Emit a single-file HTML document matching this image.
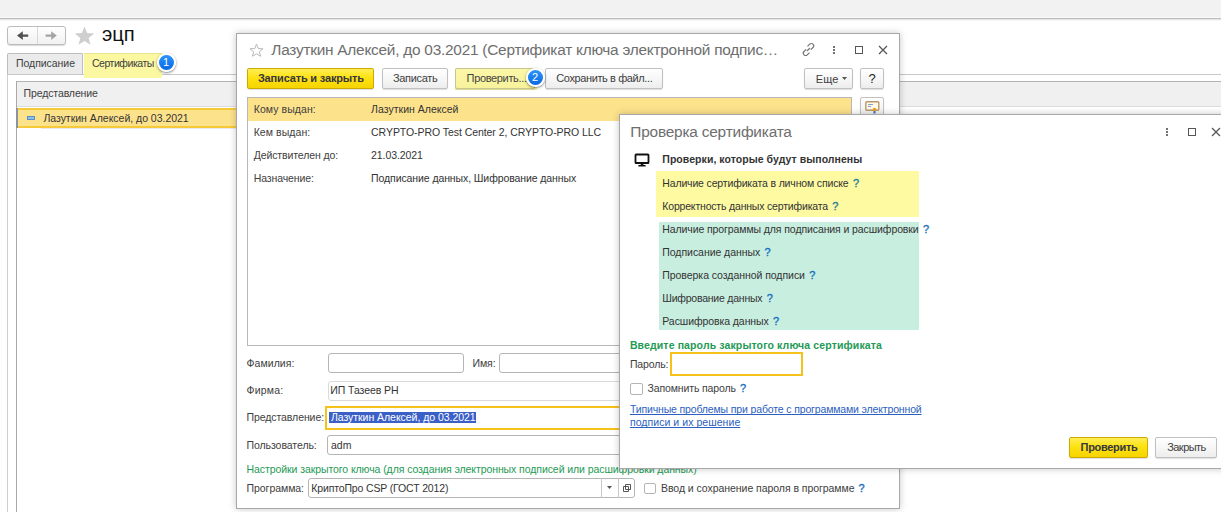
<!DOCTYPE html><html><head><meta charset="utf-8"><style>
html,body{margin:0;padding:0;}
body{width:1221px;height:512px;position:relative;overflow:hidden;background:#fff;font-family:"Liberation Sans",sans-serif;}
.t{position:absolute;white-space:pre;line-height:1;font-family:"Liberation Sans",sans-serif;}
</style></head><body>
<div style="position:absolute;left:0px;top:0px;width:1221px;height:17px;background:#f2f2f2;"></div>
<div style="position:absolute;left:0px;top:17px;width:1221px;height:1px;background:#f9f9f9;"></div>
<div style="position:absolute;left:0px;top:18px;width:1221px;height:1px;background:#bcbcbc;"></div>
<div style="position:absolute;left:0px;top:19px;width:1221px;height:1px;background:#e6e6e6;"></div>
<div style="position:absolute;left:0px;top:20px;width:1221px;height:1px;background:#f7f7f7;"></div>
<div style="position:absolute;left:7px;top:26px;width:57px;height:17px;border:1px solid #bcbcbc;border-radius:3px;background:linear-gradient(#fff,#f1f1f1);box-shadow:0 1px 1px rgba(0,0,0,.15);"></div>
<div style="position:absolute;left:37px;top:27px;width:1px;height:17px;background:#d8d8d8;"></div>
<svg style="position:absolute;left:0;top:0" width="70" height="50"><path d="M17 35.6 L22.8 31.2 L22.8 34.4 L28.2 34.4 L28.2 36.8 L22.8 36.8 L22.8 40 Z" fill="#505050"/><path d="M56.8 35.6 L51.2 31.2 L51.2 34.4 L45.6 34.4 L45.6 36.8 L51.2 36.8 L51.2 40 Z" fill="#a4a4a4"/></svg>
<svg style="position:absolute;left:74px;top:26px" width="21" height="19" viewBox="0 0 24 22"><path d="M12 0.5 L15 8.2 L23.3 8.6 L16.8 13.8 L19 21.8 L12 17.3 L5 21.8 L7.2 13.8 L0.7 8.6 L9 8.2 Z" fill="#cfcfcf"/></svg>
<div class="t" style="left:102px;top:24.00px;font-size:20.2px;color:#111;font-weight:normal;letter-spacing:-0.032px;">эцп</div>
<div style="position:absolute;left:7px;top:53px;width:74px;height:21px;background:#ebebeb;border:1px solid #bdbdbd;border-bottom:none;border-radius:2px 2px 0 0;"></div>
<div class="t" style="left:16px;top:58.00px;font-size:10.5px;color:#404040;font-weight:normal;letter-spacing:-0.044px;">Подписание</div>
<div style="position:absolute;left:84px;top:52.5px;width:78px;height:25.5px;background:#fcf8a2;border-top:1px solid #e8e290;box-sizing:border-box;"></div>
<div class="t" style="left:91.9px;top:58.00px;font-size:10.5px;color:#404040;font-weight:normal;letter-spacing:-0.455px;">Сертификаты</div>
<div style="position:absolute;left:7px;top:74px;width:1214px;height:440px;border-top:1px solid #c8c8c8;border-left:1px solid #cfcfcf;"></div>
<div style="position:absolute;left:84px;top:74px;width:78px;height:4px;background:#fcf8a2;"></div>
<div style="position:absolute;left:16px;top:81px;width:1205px;height:440px;border-top:1px solid #b4b4b4;border-left:1px solid #a9a9a9;"></div>
<div style="position:absolute;left:17px;top:82px;width:1204px;height:24px;background:#f0f0f0;border-bottom:1px solid #dcdcdc;"></div>
<div class="t" style="left:23.5px;top:88.00px;font-size:10.5px;color:#404040;font-weight:normal;letter-spacing:-0.109px;">Представление</div>
<div style="position:absolute;left:17px;top:108px;width:220px;height:20px;background:#fde28c;border-top:2px solid #f6c938;border-bottom:2px solid #f6c938;box-sizing:border-box;"></div>
<div style="position:absolute;left:16px;top:108px;width:2px;height:20px;background:#8a94a0;"></div>
<div style="position:absolute;left:26.5px;top:116px;width:6px;height:1.5px;background:#8cc0ea;border:1px solid #5a90c8;"></div>
<div style="position:absolute;left:41px;top:128px;width:196px;height:1px;background:#e6eaf2;"></div>
<div class="t" style="left:43.4px;top:113.00px;font-size:10.5px;color:#333;font-weight:normal;letter-spacing:-0.020px;">Лазуткин Алексей, до 03.2021</div>
<div style="position:absolute;left:156.5px;top:53.2px;width:15px;height:15px;border-radius:50%;background:linear-gradient(#2c94fa,#0a68e4);border:2px solid #fff;box-shadow:0 1px 2.5px rgba(0,0,0,.5);color:#fff;font:normal 11px/15px 'Liberation Sans',sans-serif;text-align:center;">1</div>
<div style="position:absolute;left:236px;top:33px;width:662px;height:474px;background:#fff;border:1px solid #a8a8a8;box-shadow:0 0 7px rgba(0,0,0,.22);"></div>
<svg style="position:absolute;left:249px;top:43px" width="15" height="14" viewBox="0 0 24 22"><path d="M12 1.5 L14.8 8.6 L22.5 9 L16.5 13.9 L18.5 21 L12 17 L5.5 21 L7.5 13.9 L1.5 9 L9.2 8.6 Z" fill="none" stroke="#b9b9b9" stroke-width="1.6"/></svg>
<div class="t" style="left:271.3px;top:42.00px;font-size:15.4px;color:#6e6e6e;font-weight:normal;letter-spacing:-0.242px;">Лазуткин Алексей, до 03.2021 (Сертификат ключа электронной подпис…</div>
<svg style="position:absolute;left:801px;top:42px" width="15" height="15" viewBox="0 0 15 15"><path d="M6 9 L9 6" stroke="#777" stroke-width="1.2"/><path d="M5.2 7.3 L3 9.5 a2.3 2.3 0 0 0 3.3 3.3 L8.5 10.6" stroke="#777" stroke-width="1.2" fill="none"/><path d="M9.8 7.7 L12 5.5 a2.3 2.3 0 0 0 -3.3 -3.3 L6.5 4.4" stroke="#777" stroke-width="1.2" fill="none"/></svg>
<div style="position:absolute;left:833px;top:46.0px;width:2px;height:2px;background:#444;border-radius:1px;"></div>
<div style="position:absolute;left:833px;top:49.2px;width:2px;height:2px;background:#444;border-radius:1px;"></div>
<div style="position:absolute;left:833px;top:52.4px;width:2px;height:2px;background:#444;border-radius:1px;"></div>
<div style="position:absolute;left:855px;top:46px;width:6px;height:6px;border:1.3px solid #555;"></div>
<svg style="position:absolute;left:878px;top:45px" width="10" height="10" viewBox="0 0 10 10"><path d="M1 1 L9 9 M9 1 L1 9" stroke="#555" stroke-width="1.2"/></svg>
<div style="position:absolute;left:247px;top:68px;width:125px;height:19px;border-radius:2px;box-shadow:0 1px 1px rgba(0,0,0,.13);background:linear-gradient(#ffee55,#fde212 45%,#f6d400);border:1px solid #cdaa00;"></div>
<div class="t" style="left:257.9px;top:73.00px;font-size:11px;color:#363640;font-weight:bold;letter-spacing:-0.168px;">Записать и закрыть</div>
<div style="position:absolute;left:382px;top:68px;width:64px;height:19px;border-radius:2px;box-shadow:0 1px 1px rgba(0,0,0,.13);background:linear-gradient(#ffffff,#f6f6f6 55%,#ededed);border:1px solid #c0c0c0;"></div>
<div class="t" style="left:393px;top:73.00px;font-size:11px;color:#404040;font-weight:normal;letter-spacing:-0.327px;">Записать</div>
<div style="position:absolute;left:455px;top:68px;width:82px;height:22px;background:#f9f6a8;"></div>
<div style="position:absolute;left:455px;top:68px;width:78px;height:19px;border-radius:2px;box-shadow:0 1px 1px rgba(0,0,0,.13);background:linear-gradient(#fbf7a8,#f7f29a);border:1px solid #c9c590;"></div>
<div class="t" style="left:466.6px;top:73.00px;font-size:11px;color:#444;font-weight:normal;letter-spacing:-0.349px;">Проверить...</div>
<div style="position:absolute;left:545px;top:68px;width:116px;height:19px;border-radius:2px;box-shadow:0 1px 1px rgba(0,0,0,.13);background:linear-gradient(#ffffff,#f6f6f6 55%,#ededed);border:1px solid #c0c0c0;"></div>
<div class="t" style="left:556.3px;top:73.00px;font-size:11px;color:#404040;font-weight:normal;letter-spacing:-0.396px;">Сохранить в файл...</div>
<div style="position:absolute;left:525.5px;top:67.9px;width:15px;height:15px;border-radius:50%;background:linear-gradient(#2c94fa,#0a68e4);border:2px solid #fff;box-shadow:0 1px 2.5px rgba(0,0,0,.5);color:#fff;font:normal 11px/15px 'Liberation Sans',sans-serif;text-align:center;">2</div>
<div style="position:absolute;left:804px;top:68px;width:47px;height:19px;border-radius:2px;box-shadow:0 1px 1px rgba(0,0,0,.13);background:linear-gradient(#ffffff,#f6f6f6 55%,#ededed);border:1px solid #c0c0c0;"></div>
<div class="t" style="left:815.8px;top:74.00px;font-size:11px;color:#404040;font-weight:normal;letter-spacing:0.036px;">Еще</div>
<svg style="position:absolute;left:842px;top:77px" width="6" height="4"><path d="M0 0 H5 L2.5 3 Z" fill="#555"/></svg>
<div style="position:absolute;left:860px;top:68px;width:22px;height:19px;border-radius:2px;box-shadow:0 1px 1px rgba(0,0,0,.13);background:linear-gradient(#ffffff,#f6f6f6 55%,#ededed);border:1px solid #c0c0c0;"></div>
<div class="t" style="left:868.5px;top:72.00px;font-size:13px;color:#222;font-weight:normal;letter-spacing:0.000px;">?</div>
<div style="position:absolute;left:247px;top:97px;width:605px;height:249px;border:1px solid #b8b8b8;box-sizing:border-box;"></div>
<div style="position:absolute;left:248px;top:98px;width:603px;height:23px;background:#fde28c;"></div>
<div class="t" style="left:253.7px;top:104.00px;font-size:10.5px;color:#404040;font-weight:normal;letter-spacing:0.074px;">Кому выдан:</div>
<div class="t" style="left:371.1px;top:104.00px;font-size:10.5px;color:#333;font-weight:normal;letter-spacing:0.013px;">Лазуткин Алексей</div>
<div class="t" style="left:253.7px;top:127.00px;font-size:10.5px;color:#404040;font-weight:normal;letter-spacing:0.069px;">Кем выдан:</div>
<div class="t" style="left:371.1px;top:127.00px;font-size:10.5px;color:#333;font-weight:normal;letter-spacing:-0.061px;">CRYPTO-PRO Test Center 2, CRYPTO-PRO LLC</div>
<div class="t" style="left:253.7px;top:150.00px;font-size:10.5px;color:#404040;font-weight:normal;letter-spacing:-0.105px;">Действителен до:</div>
<div class="t" style="left:371.1px;top:150.00px;font-size:10.5px;color:#333;font-weight:normal;letter-spacing:-0.086px;">21.03.2021</div>
<div class="t" style="left:253.7px;top:173.00px;font-size:10.5px;color:#404040;font-weight:normal;letter-spacing:-0.097px;">Назначение:</div>
<div class="t" style="left:371.1px;top:173.00px;font-size:10.5px;color:#333;font-weight:normal;letter-spacing:-0.095px;">Подписание данных, Шифрование данных</div>
<div style="position:absolute;left:860px;top:97px;width:22px;height:19px;border-radius:2px;box-shadow:0 1px 1px rgba(0,0,0,.13);background:linear-gradient(#ffffff,#f6f6f6 55%,#ededed);border:1px solid #c0c0c0;"></div>
<svg style="position:absolute;left:865px;top:101px" width="15" height="14" viewBox="0 0 15 14"><rect x="0.8" y="0.8" width="13" height="8.5" rx="1" fill="#fffbe8" stroke="#b8996a" stroke-width="1.4"/><path d="M3 3.5 H8 M3 5.5 H6" stroke="#6a8ac0" stroke-width="0.8"/><path d="M8.5 9 L8.5 13 L9.5 12 L10.5 13 L10.5 9 Z" fill="#3070c0"/><circle cx="9.5" cy="8.5" r="1.8" fill="#f0a020"/></svg>
<div class="t" style="left:246.5px;top:358.00px;font-size:10.5px;color:#404040;font-weight:normal;letter-spacing:0.061px;">Фамилия:</div>
<div style="position:absolute;left:327.5px;top:353px;width:136.5px;height:20px;border:1px solid #b5b5b5;border-radius:3px;box-sizing:border-box;"></div>
<div class="t" style="left:472.5px;top:358.00px;font-size:10.5px;color:#404040;font-weight:normal;letter-spacing:-0.094px;">Имя:</div>
<div style="position:absolute;left:499px;top:353px;width:385px;height:20px;border:1px solid #b5b5b5;border-radius:3px;box-sizing:border-box;"></div>
<div class="t" style="left:246.5px;top:385.00px;font-size:10.5px;color:#404040;font-weight:normal;letter-spacing:0.221px;">Фирма:</div>
<div style="position:absolute;left:327.5px;top:381px;width:556px;height:20px;border:1px solid #dadada;border-radius:3px;box-sizing:border-box;"></div>
<div class="t" style="left:330.3px;top:385.00px;font-size:10.5px;color:#333;font-weight:normal;letter-spacing:-0.078px;">ИП Тазеев РН</div>
<div class="t" style="left:246.5px;top:412.00px;font-size:10.5px;color:#404040;font-weight:normal;letter-spacing:-0.081px;">Представление:</div>
<div style="position:absolute;left:325px;top:406px;width:559px;height:24px;border:2px solid #f5c21a;box-sizing:border-box;"></div>
<div style="position:absolute;left:329.4px;top:412.2px;width:146.6px;height:11.1px;background:#3a5fc7;"></div>
<div class="t" style="left:330.9px;top:412.00px;font-size:10.5px;color:#fff;font-weight:normal;letter-spacing:-0.041px;">Лазуткин Алексей, до 03.2021</div>
<div class="t" style="left:246.5px;top:440.00px;font-size:10.5px;color:#404040;font-weight:normal;letter-spacing:-0.066px;">Пользователь:</div>
<div style="position:absolute;left:327px;top:435px;width:557px;height:20px;border:1px solid #b5b5b5;border-radius:3px;box-sizing:border-box;"></div>
<div class="t" style="left:330.9px;top:440.00px;font-size:10.5px;color:#333;font-weight:normal;letter-spacing:0.087px;">adm</div>
<div class="t" style="left:246.5px;top:464.00px;font-size:10.5px;color:#1e9a55;font-weight:normal;letter-spacing:-0.075px;">Настройки закрытого ключа (для создания электронных подписей или расшифровки данных)</div>
<div class="t" style="left:246.5px;top:483.00px;font-size:10.5px;color:#404040;font-weight:normal;letter-spacing:-0.044px;">Программа:</div>
<div style="position:absolute;left:307.5px;top:478px;width:327px;height:20px;border:1px solid #b5b5b5;border-radius:3px;box-sizing:border-box;"></div>
<div style="position:absolute;left:601px;top:478px;width:1px;height:20px;background:#c8c8c8;"></div>
<div style="position:absolute;left:618px;top:478px;width:1px;height:20px;background:#c8c8c8;"></div>
<div class="t" style="left:311.3px;top:483.00px;font-size:10.5px;color:#333;font-weight:normal;letter-spacing:-0.147px;">КриптоПро CSP (ГОСТ 2012)</div>
<svg style="position:absolute;left:607px;top:486px" width="6" height="4"><path d="M0 0 H5 L2.5 3 Z" fill="#555"/></svg>
<svg style="position:absolute;left:622px;top:483px" width="10" height="10" viewBox="0 0 10 10"><path d="M3.5 1.5 H8.5 V6.5 H3.5 Z M1.5 3.5 H6.5 V8.5 H1.5 Z" fill="#fff" stroke="#555" stroke-width="1"/></svg>
<div style="position:absolute;left:644px;top:482.5px;width:12px;height:11.5px;border:1px solid #b5b5b5;border-radius:2px;box-sizing:border-box;"></div>
<div class="t" style="left:661px;top:483.00px;font-size:10.5px;color:#404040;font-weight:normal;letter-spacing:-0.051px;">Ввод и сохранение пароля в программе</div>
<div class="t" style="left:858.5px;top:483.00px;font-size:11px;color:#1a6ec0;font-weight:normal;letter-spacing:0.000px;-webkit-text-stroke:0.35px currentColor;">?</div>
<div style="position:absolute;left:619px;top:114px;width:620px;height:353px;background:#fff;border:1px solid #a8a8a8;box-shadow:0 0 7px rgba(0,0,0,.22);"></div>
<div class="t" style="left:630.3px;top:124.00px;font-size:15.4px;color:#6e6e6e;font-weight:normal;letter-spacing:-0.196px;">Проверка сертификата</div>
<div style="position:absolute;left:1166px;top:127.5px;width:2px;height:2px;background:#444;border-radius:1px;"></div>
<div style="position:absolute;left:1166px;top:130.7px;width:2px;height:2px;background:#444;border-radius:1px;"></div>
<div style="position:absolute;left:1166px;top:133.9px;width:2px;height:2px;background:#444;border-radius:1px;"></div>
<div style="position:absolute;left:1188px;top:128px;width:6px;height:6px;border:1.3px solid #555;"></div>
<svg style="position:absolute;left:1211px;top:127px" width="10" height="10" viewBox="0 0 10 10"><path d="M1 1 L9 9 M9 1 L1 9" stroke="#555" stroke-width="1.2"/></svg>
<svg style="position:absolute;left:634px;top:153px" width="16" height="15" viewBox="0 0 16 15"><rect x="1.5" y="1.5" width="13" height="8.5" rx="0.6" fill="none" stroke="#111" stroke-width="1.8"/><rect x="6.8" y="10" width="2.6" height="2.3" fill="#111"/><rect x="4.3" y="12" width="7.4" height="1.6" rx="0.6" fill="#111"/></svg>
<div class="t" style="left:662.3px;top:154.00px;font-size:10.5px;color:#333;font-weight:bold;letter-spacing:0.056px;">Проверки, которые будут выполнены</div>
<div style="position:absolute;left:656px;top:171px;width:263px;height:46px;background:#fdfaa2;"></div>
<div style="position:absolute;left:658.5px;top:221.5px;width:260.5px;height:108.5px;background:#c8eee0;"></div>
<div class="t" style="left:662.3px;top:178.00px;font-size:10.5px;color:#333;font-weight:normal;letter-spacing:-0.155px;">Наличие сертификата в личном списке</div>
<div class="t" style="left:852.9px;top:178.00px;font-size:11px;color:#1f7d9c;font-weight:normal;letter-spacing:0.000px;-webkit-text-stroke:0.35px currentColor;">?</div>
<div class="t" style="left:662.3px;top:201.00px;font-size:10.5px;color:#333;font-weight:normal;letter-spacing:-0.181px;">Корректность данных сертификата</div>
<div class="t" style="left:832.3px;top:201.00px;font-size:11px;color:#1f7d9c;font-weight:normal;letter-spacing:0.000px;-webkit-text-stroke:0.35px currentColor;">?</div>
<div class="t" style="left:662.3px;top:224.00px;font-size:10.5px;color:#333;font-weight:normal;letter-spacing:-0.098px;">Наличие программы для подписания и расшифровки</div>
<div class="t" style="left:923.0px;top:224.00px;font-size:11px;color:#1a6ec0;font-weight:normal;letter-spacing:0.000px;-webkit-text-stroke:0.35px currentColor;">?</div>
<div class="t" style="left:662.3px;top:247.00px;font-size:10.5px;color:#333;font-weight:normal;letter-spacing:-0.048px;">Подписание данных</div>
<div class="t" style="left:764.6px;top:247.00px;font-size:11px;color:#1a6ec0;font-weight:normal;letter-spacing:0.000px;-webkit-text-stroke:0.35px currentColor;">?</div>
<div class="t" style="left:662.3px;top:270.00px;font-size:10.5px;color:#333;font-weight:normal;letter-spacing:-0.050px;">Проверка созданной подписи</div>
<div class="t" style="left:809.3px;top:270.00px;font-size:11px;color:#1a6ec0;font-weight:normal;letter-spacing:0.000px;-webkit-text-stroke:0.35px currentColor;">?</div>
<div class="t" style="left:662.3px;top:293.00px;font-size:10.5px;color:#333;font-weight:normal;letter-spacing:-0.229px;">Шифрование данных</div>
<div class="t" style="left:766.7px;top:293.00px;font-size:11px;color:#1a6ec0;font-weight:normal;letter-spacing:0.000px;-webkit-text-stroke:0.35px currentColor;">?</div>
<div class="t" style="left:662.3px;top:316.00px;font-size:10.5px;color:#333;font-weight:normal;letter-spacing:-0.082px;">Расшифровка данных</div>
<div class="t" style="left:773.1px;top:316.00px;font-size:11px;color:#1a6ec0;font-weight:normal;letter-spacing:0.000px;-webkit-text-stroke:0.35px currentColor;">?</div>
<div class="t" style="left:629.9px;top:340.00px;font-size:10.5px;color:#1e9a55;font-weight:bold;letter-spacing:0.125px;">Введите пароль закрытого ключа сертификата</div>
<div class="t" style="left:629.9px;top:359.00px;font-size:10.5px;color:#404040;font-weight:normal;letter-spacing:-0.137px;">Пароль:</div>
<div style="position:absolute;left:670px;top:352px;width:133px;height:24px;border:2px solid #f5c21a;box-sizing:border-box;"></div>
<div style="position:absolute;left:630.4px;top:382.5px;width:12.3px;height:12px;border:1px solid #b5b5b5;border-radius:2px;box-sizing:border-box;"></div>
<div class="t" style="left:647.6px;top:383.00px;font-size:10.5px;color:#404040;font-weight:normal;letter-spacing:-0.135px;">Запомнить пароль</div>
<div class="t" style="left:740px;top:383.00px;font-size:11px;color:#1a6ec0;font-weight:normal;letter-spacing:0.000px;-webkit-text-stroke:0.35px currentColor;">?</div>
<div class="t" style="left:629.9px;top:404.00px;font-size:10.5px;color:#2c5fc0;font-weight:normal;letter-spacing:-0.144px;text-decoration:underline;text-decoration-skip-ink:none;">Типичные проблемы при работе с программами электронной</div>
<div class="t" style="left:629.9px;top:417.00px;font-size:10.5px;color:#2c5fc0;font-weight:normal;letter-spacing:0.057px;text-decoration:underline;text-decoration-skip-ink:none;">подписи и их решение</div>
<div style="position:absolute;left:1069px;top:437px;width:77px;height:19px;border-radius:2px;box-shadow:0 1px 1px rgba(0,0,0,.13);background:linear-gradient(#ffee55,#fde212 45%,#f6d400);border:1px solid #cdaa00;"></div>
<div class="t" style="left:1080.6px;top:442.00px;font-size:11px;color:#363640;font-weight:bold;letter-spacing:-0.313px;">Проверить</div>
<div style="position:absolute;left:1155px;top:437px;width:60px;height:19px;border-radius:2px;box-shadow:0 1px 1px rgba(0,0,0,.13);background:linear-gradient(#ffffff,#f6f6f6 55%,#ededed);border:1px solid #c0c0c0;"></div>
<div class="t" style="left:1167.2px;top:442.00px;font-size:11px;color:#404040;font-weight:normal;letter-spacing:-0.539px;">Закрыть</div>
</body></html>
